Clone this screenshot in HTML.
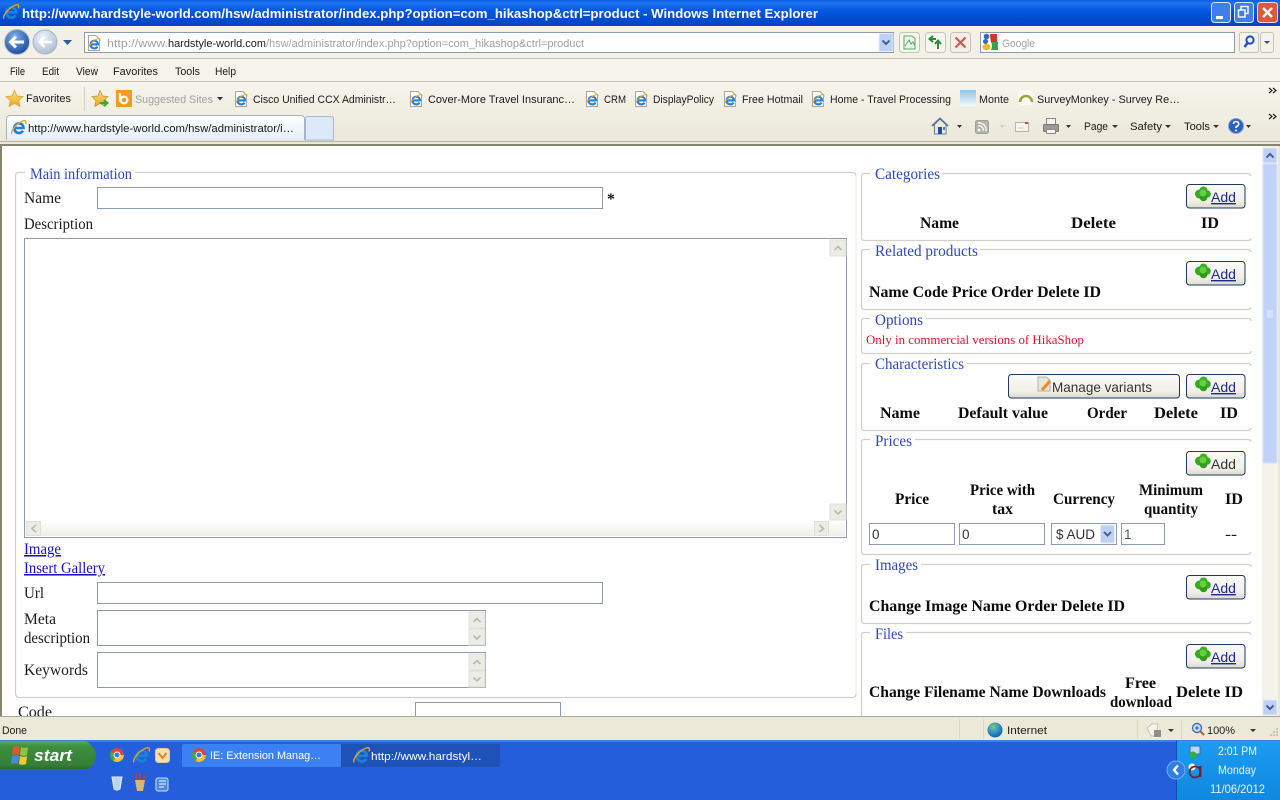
<!DOCTYPE html>
<html lang="en"><head><meta charset="utf-8"><title>Windows Internet Explorer</title>
<style>
html,body{margin:0;padding:0;background:#fff;overflow:hidden}
svg{display:block}
text{white-space:pre}
.u{font:11px "Liberation Sans",sans-serif;fill:#1a1a1a}
.g{fill:#a0a0a0}
.s{font:15.5px "Liberation Serif",serif;fill:#1c1c1c}
.b{font:bold 15.5px "Liberation Serif",serif;fill:#0c0c0c}
.l{font:15.5px "Liberation Serif",serif;fill:#2f48b8}
.a{font:15.5px "Liberation Serif",serif;fill:#1a10c8;text-decoration:underline}
.w{font:11px "Liberation Sans",sans-serif;fill:#fff}
.f{fill:none;stroke:#d0d0c8;stroke-width:1.2}
.i{fill:#fff;stroke:#8c9cb0;stroke-width:1}
.ab{font:14px "Liberation Sans",sans-serif;fill:#2a3468}
</style></head><body>
<svg width="1280" height="800" viewBox="0 0 1280 800" xmlns="http://www.w3.org/2000/svg">
<defs>
<linearGradient id="tb" x1="0" y1="0" x2="0" y2="1"><stop offset="0" stop-color="#0b5fe6"/><stop offset=".12" stop-color="#1c72f0"/><stop offset=".4" stop-color="#0458e0"/><stop offset="1" stop-color="#0042c4"/></linearGradient>
<linearGradient id="tool" x1="0" y1="0" x2="0" y2="1"><stop offset="0" stop-color="#f6f4ec"/><stop offset="1" stop-color="#ebe8d9"/></linearGradient>
<linearGradient id="btn" x1="0" y1="0" x2="0" y2="1"><stop offset="0" stop-color="#fbfbf8"/><stop offset=".7" stop-color="#f0efe8"/><stop offset="1" stop-color="#dcdbd0"/></linearGradient>
<linearGradient id="hb" x1="0" y1="0" x2="0" y2="1"><stop offset="0" stop-color="#fff"/><stop offset="1" stop-color="#eeeee8"/></linearGradient>
<linearGradient id="start" x1="0" y1="0" x2="0" y2="1"><stop offset="0" stop-color="#5aa85c"/><stop offset=".2" stop-color="#3c8f3e"/><stop offset=".85" stop-color="#357f37"/><stop offset="1" stop-color="#2a6b2c"/></linearGradient>
<linearGradient id="tray" x1="0" y1="0" x2="0" y2="1"><stop offset="0" stop-color="#1c9cf0"/><stop offset="1" stop-color="#1088e0"/></linearGradient>
<linearGradient id="tab" x1="0" y1="0" x2="0" y2="1"><stop offset="0" stop-color="#fff"/><stop offset="1" stop-color="#e4edfa"/></linearGradient>
<linearGradient id="monte" x1="0" y1="0" x2="0" y2="1"><stop offset="0" stop-color="#8fc6ea"/><stop offset="1" stop-color="#f2f8fc"/></linearGradient>
<linearGradient id="star" x1="0" y1="0" x2="0" y2="1"><stop offset="0" stop-color="#fbe07a"/><stop offset="1" stop-color="#f0a422"/></linearGradient>
<radialGradient id="bk" cx=".4" cy=".3" r=".8"><stop offset="0" stop-color="#7fb0ea"/><stop offset="1" stop-color="#123f92"/></radialGradient>
<radialGradient id="fw" cx=".4" cy=".3" r=".8"><stop offset="0" stop-color="#eef3f9"/><stop offset="1" stop-color="#a5b7cc"/></radialGradient>
<radialGradient id="gl" cx=".4" cy=".3" r=".8"><stop offset="0" stop-color="#7ccc70"/><stop offset=".5" stop-color="#2b8fd0"/><stop offset="1" stop-color="#134f8c"/></radialGradient>
<g id="ie"><path d="M3.500 8H12.500C12.500 4 8 2 5 4.500C2 7 3 12.500 7.500 13C9.500 13.200 11 12.200 12 10.800" fill="none" stroke="#1f7fdc" stroke-width="2.600"/><path d="M.8 14C-.5 10.500 6 3 12.500 .8C15 .1 15.500 2 14.500 4" fill="none" stroke="#e6a41e" stroke-width="1.300"/></g>
<g id="pg"><path d="M1.500 .5H9L12.500 4V15.500H1.500Z" fill="#fff" stroke="#a8a89e"/><use href="#ie" transform="translate(1 3) scale(.8)"/></g>
<g id="plus"><circle cx="5.500" cy="8" r="4.500" fill="#36a822"/><circle cx="9.500" cy="4.500" r="4" fill="#3cae25"/><circle cx="13" cy="8" r="3.800" fill="#36a822"/><circle cx="9.500" cy="11.500" r="3.800" fill="#2f9c1e"/><circle cx="9" cy="7" r="3.500" fill="#62d040"/></g>
<g id="add"><rect x=".5" y=".5" width="58.500" height="23.500" rx="3" fill="url(#btn)" stroke="#1d3a5f" stroke-width="1"/><use href="#plus" x="8" y="2"/></g>
<g id="up"><rect width="16" height="16" fill="#ecece6" stroke="#e0e0da"/><path d="M4.500 10L8 6.500L11.500 10" fill="none" stroke="#b9b9b0" stroke-width="1.600"/></g>
<g id="dn"><rect width="16" height="16" fill="#ecece6" stroke="#e0e0da"/><path d="M4.500 6.500L8 10L11.500 6.500" fill="none" stroke="#b9b9b0" stroke-width="1.600"/></g>
<g id="bdn"><rect width="14" height="18" rx="1" fill="#bfd0f5" stroke="#e6ecf8"/><path d="M3.500 7L7 10.500L10.500 7" fill="none" stroke="#3d5a8f" stroke-width="1.900"/></g>
<g id="chr"><circle cx="7" cy="7" r="7" fill="#d8453a"/><path d="M7 7L14 7A7 7 0 0 1 3.500 13Z" fill="#f0c030"/><path d="M7 7L3.500 13A7 7 0 0 1 1 3.500Z" fill="#3fa74a"/><circle cx="7" cy="7" r="3" fill="#3a78d8" stroke="#fff"/></g>
</defs>

<rect width="1280" height="800" fill="#fff"/>
<rect width="1280" height="26" fill="url(#tb)"/>
<use href="#ie" transform="translate(3 4) scale(1.050)"/>
<text x="22" y="18" font-family="Liberation Sans,sans-serif" font-weight="bold" font-size="13" fill="#fff" textLength="796" lengthAdjust="spacingAndGlyphs">http://www.hardstyle-world.com/hsw/administrator/index.php?option=com_hikashop&amp;ctrl=product - Windows Internet Explorer</text>
<rect x="1211.500" y="2.500" width="19" height="20" rx="3" fill="#3f7fe8" stroke="#dce8fb"/><rect x="1216" y="16" width="7" height="3" fill="#fff"/>
<rect x="1234.500" y="2.500" width="19" height="20" rx="3" fill="#3f7fe8" stroke="#dce8fb"/><rect x="1241" y="6.500" width="7" height="7" fill="none" stroke="#fff" stroke-width="1.400"/><rect x="1238.500" y="10" width="6.500" height="7" fill="#3f7fe8" stroke="#fff" stroke-width="1.400"/>
<rect x="1257.500" y="2.500" width="20" height="20" rx="3" fill="#e0583a" stroke="#f6d8cf"/><path d="M1263 8L1272 17M1272 8L1263 17" stroke="#fff" stroke-width="2.400"/>

<rect y="26" width="1280" height="118" fill="url(#tool)"/>
<rect y="26" width="1280" height="32" fill="#f3f1e7"/>
<rect y="58" width="1280" height="1" fill="#c4c3b6"/>
<rect y="59" width="1280" height="22" fill="#f5f3ea"/>
<rect y="81" width="1280" height="1" fill="#c4c3b6"/>
<rect y="82" width="1280" height="60" fill="url(#tool)"/>
<rect y="141" width="1280" height="1" fill="#b4b3a6"/>
<rect y="142" width="1280" height="2" fill="#ece9d8"/>
<rect y="144" width="1280" height="2" fill="#85856f"/>

<circle cx="45" cy="42" r="12" fill="url(#fw)" stroke="#a8b6c6"/><path d="M52 42H40M44.500 37L39.500 42L44.500 47" fill="none" stroke="#fff" stroke-width="2.600"/>
<circle cx="17" cy="42" r="12.500" fill="url(#bk)" stroke="#b4c2d4"/><path d="M24 42H11M16 36.500L10.500 42L16 47.500" fill="none" stroke="#fff" stroke-width="3"/>
<path d="M63 40H72L67.500 45Z" fill="#2a5d9c"/>
<rect x="84.500" y="32.500" width="809" height="20" fill="#fff" stroke="#8b9cab"/>
<use href="#pg" x="87" y="35"/>
<text class="u g" x="107" y="47" textLength="61" lengthAdjust="spacingAndGlyphs">http://www.</text>
<text class="u" x="168" y="47" textLength="98" lengthAdjust="spacingAndGlyphs">hardstyle-world.com</text>
<text class="u g" x="266" y="47" textLength="318" lengthAdjust="spacingAndGlyphs">/hsw/administrator/index.php?option=com_hikashop&amp;ctrl=product</text>
<use href="#bdn" x="879" y="33.500"/>
<rect x="899.500" y="32.500" width="20" height="20" rx="3" fill="#f7f6ef" stroke="#c4c4b8"/><path d="M904 36H912L915 38.500V49H904Z" fill="#eef7ec" stroke="#5aa860"/><path d="M905 46L909 40L911 44L913 42L915 46" fill="none" stroke="#5aa860"/>
<rect x="925.500" y="32.500" width="20" height="20" rx="3" fill="#f7f6ef" stroke="#c4c4b8"/><path d="M936 39H930M933 36L929.500 39L933 42" fill="none" stroke="#2c8a3a" stroke-width="2"/><path d="M938 49V41M935 44L938 40.500L941 44" fill="none" stroke="#2c8a3a" stroke-width="2"/>
<rect x="950.500" y="32.500" width="20" height="20" rx="3" fill="#f5ede8" stroke="#c8c0b8"/><path d="M955.500 37.500L965.500 47.500M965.500 37.500L955.500 47.500" stroke="#c85a58" stroke-width="2.200"/>
<rect x="980.500" y="32.500" width="254" height="20" fill="#fff" stroke="#8b9cab"/>
<circle cx="986.500" cy="36.500" r="2.800" fill="#2f66c8"/><circle cx="985.500" cy="41.500" r="2.500" fill="#2f66c8"/><ellipse cx="986.500" cy="47" rx="4" ry="3.200" fill="#f0b72a"/><path d="M990 34H997V42H991Q990 38 990 34Z" fill="#d8322a"/><path d="M991 42H998V50H991Q993 46 991 42Z" fill="#3aa04a"/>
<text class="u g" x="1002" y="47" textLength="33" lengthAdjust="spacingAndGlyphs">Google</text>
<rect x="1239.500" y="32.500" width="19" height="20" rx="2" fill="#f4f3ea" stroke="#c4c4b8"/><circle cx="1250" cy="40" r="3.600" fill="none" stroke="#1b4fc4" stroke-width="2"/><path d="M1247.500 43L1244.500 47" stroke="#1b4fc4" stroke-width="2.400"/>
<rect x="1260.500" y="32.500" width="13" height="20" rx="2" fill="#f4f3ea" stroke="#c4c4b8"/><path d="M1264 41H1270L1267 44Z" fill="#2a4f8c"/>

<text class="u" x="10" y="75" textLength="15" lengthAdjust="spacingAndGlyphs">File</text>
<text class="u" x="42" y="75" textLength="17" lengthAdjust="spacingAndGlyphs">Edit</text>
<text class="u" x="76" y="75" textLength="22" lengthAdjust="spacingAndGlyphs">View</text>
<text class="u" x="113" y="75" textLength="45" lengthAdjust="spacingAndGlyphs">Favorites</text>
<text class="u" x="175" y="75" textLength="25" lengthAdjust="spacingAndGlyphs">Tools</text>
<text class="u" x="215" y="75" textLength="21" lengthAdjust="spacingAndGlyphs">Help</text>

<path d="M14.500 90.500L17 96L23 96.600L18.600 100.600L20 106.500L14.500 103.400L9 106.500L10.400 100.600L6 96.600L12 96Z" fill="url(#star)" stroke="#d8a038" stroke-width=".8"/>
<text class="u" x="26" y="102" textLength="45" lengthAdjust="spacingAndGlyphs">Favorites</text>
<rect x="84" y="87" width="1" height="24" fill="#d2d0be"/>
<path d="M100 90.500L102.500 96L108 96.600L104 100.600L105.200 106.500L100 103.400L94.800 106.500L96 100.600L92 96.600L98 96Z" fill="url(#star)" stroke="#b89a40" stroke-width=".8"/><path d="M100 103H106M104 100L107.500 103L104 106" fill="none" stroke="#3aa53a" stroke-width="2"/>
<rect x="116" y="90" width="16" height="17" fill="#f59a1d"/><path d="M120 93V102" stroke="#fff" stroke-width="2.400"/><circle cx="124" cy="100" r="3.400" fill="none" stroke="#fff" stroke-width="2.200"/>
<text class="u g" x="135" y="103" textLength="78" lengthAdjust="spacingAndGlyphs">Suggested Sites</text>
<path d="M217 97H223L220 100.500Z" fill="#333"/>
<use href="#pg" x="234" y="91"/><text class="u" x="253" y="103" textLength="143" lengthAdjust="spacingAndGlyphs">Cisco Unified CCX Administr…</text>
<use href="#pg" x="409" y="91"/><text class="u" x="428" y="103" textLength="147" lengthAdjust="spacingAndGlyphs">Cover-More Travel Insuranc…</text>
<use href="#pg" x="585" y="91"/><text class="u" x="604" y="103" textLength="22" lengthAdjust="spacingAndGlyphs">CRM</text>
<use href="#pg" x="634" y="91"/><text class="u" x="653" y="103" textLength="61" lengthAdjust="spacingAndGlyphs">DisplayPolicy</text>
<use href="#pg" x="723" y="91"/><text class="u" x="742" y="103" textLength="61" lengthAdjust="spacingAndGlyphs">Free Hotmail</text>
<use href="#pg" x="811" y="91"/><text class="u" x="830" y="103" textLength="121" lengthAdjust="spacingAndGlyphs">Home - Travel Processing</text>
<rect x="960" y="90" width="16" height="16" fill="url(#monte)"/>
<text class="u" x="979" y="103" textLength="30" lengthAdjust="spacingAndGlyphs">Monte</text>
<rect x="1018" y="90" width="15" height="15" rx="3" fill="#fafaf2"/><path d="M1020 102A6 6 0 0 1 1032 102" fill="none" stroke="#9aa83c" stroke-width="2.600"/>
<text class="u" x="1037" y="103" textLength="143" lengthAdjust="spacingAndGlyphs">SurveyMonkey - Survey Re…</text>
<path d="M1269 88L1272 90.500L1269 93M1273 88L1276 90.500L1273 93" fill="none" stroke="#222" stroke-width="1.200"/>

<path d="M6.500 140V119Q6.500 115.500 10 115.500H301Q304.500 115.500 304.500 119V140" fill="url(#tab)" stroke="#a6b2c2"/>
<use href="#ie" transform="translate(11 120)"/>
<text class="u" x="28" y="132" textLength="266" lengthAdjust="spacingAndGlyphs">http://www.hardstyle-world.com/hsw/administrator/i…</text>
<path d="M305.500 140V119Q305.500 116.500 308 116.500H331Q333.500 116.500 333.500 119V140Z" fill="#dde8f8" stroke="#a9bad0"/>

<path d="M934.500 124.500V134H946V124.500L940 119Z" fill="#f0ecdc" stroke="#6c7c98"/><path d="M932 126L940 118.500L948 126" fill="none" stroke="#5f7396" stroke-width="1.800"/><rect x="938" y="127" width="4" height="7" fill="#1f4e9c"/><rect x="943" y="127" width="2" height="3" fill="#4f80c8"/>
<path d="M957 125H962L959.500 128Z" fill="#333"/>
<rect x="975.500" y="120.500" width="13" height="13" rx="2" fill="#b4b4ac" stroke="#a0a098"/><circle cx="979" cy="130" r="1.400" fill="#fff"/><path d="M978 126A4 4 0 0 1 983 131M978 123A7 7 0 0 1 986 131" fill="none" stroke="#fff" stroke-width="1.200"/>
<path d="M1000 125H1005L1002.500 128Z" fill="#d0d0c8"/>
<rect x="1015.500" y="122.500" width="13" height="9" fill="#f6f5f0" stroke="#b4b4aa"/><path d="M1018 128H1023" stroke="#c9c9c0"/><rect x="1025" y="122" width="3" height="2" fill="#d0453a"/>
<rect x="1046.500" y="118.500" width="9" height="6" fill="#f4f4f0" stroke="#888"/><rect x="1043.500" y="124.500" width="15" height="7" rx="1" fill="#9a9a96" stroke="#777"/><rect x="1046.500" y="129.500" width="9" height="4" fill="#fff" stroke="#888"/>
<path d="M1066 125H1071L1068.500 128Z" fill="#333"/>
<text class="u" x="1084" y="130" textLength="24" lengthAdjust="spacingAndGlyphs">Page</text><path d="M1112 125H1118L1115 128Z" fill="#333"/>
<text class="u" x="1130" y="130" textLength="32" lengthAdjust="spacingAndGlyphs">Safety</text><path d="M1165 125H1171L1168 128Z" fill="#333"/>
<text class="u" x="1184" y="130" textLength="26" lengthAdjust="spacingAndGlyphs">Tools</text><path d="M1213 125H1219L1216 128Z" fill="#333"/>
<circle cx="1236" cy="126" r="7.500" fill="#2f5fc0" stroke="#8fa5d0"/><path d="M1233.500 124Q1233.500 121.500 1236 121.500Q1238.700 121.500 1238.700 124Q1238.700 125.500 1236 127V128" fill="none" stroke="#fff" stroke-width="1.600"/><circle cx="1236" cy="130.500" r="1" fill="#fff"/>
<path d="M1246 125H1251L1248.500 128Z" fill="#333"/>
<path d="M1269 114L1272 116.500L1269 119M1273 114L1276 116.500L1273 119" fill="none" stroke="#222" stroke-width="1.200"/>

<rect y="146" width="2" height="570" fill="#85856f"/>
<path class="f" d="M25 172.500H19Q15.500 172.500 15.500 176V693Q15.500 697.500 19 697.500H852Q856 697.500 856 694M856 176Q856 172.500 852 172.500H135"/>
<path d="M856 176V694" stroke="#e8e8e2" fill="none"/>
<text class="l" x="30" y="179" textLength="102" lengthAdjust="spacingAndGlyphs">Main information</text>
<text class="s" x="24" y="203" textLength="37" lengthAdjust="spacingAndGlyphs">Name</text>
<rect class="i" x="97.500" y="187.500" width="505" height="21"/>
<text class="b" x="607" y="204">*</text>
<text class="s" x="24" y="229" textLength="69" lengthAdjust="spacingAndGlyphs">Description</text>
<rect class="i" x="24.500" y="238.500" width="822" height="299"/>
<rect x="26" y="520" width="819" height="16" fill="url(#hb)"/>
<use href="#up" x="830" y="240"/><use href="#dn" x="830" y="504"/>
<rect x="26.500" y="521.500" width="14" height="14" fill="#ecece6" stroke="#e0e0da"/><path d="M36 525L32 528.500L36 532" fill="none" stroke="#b9b9b0" stroke-width="1.600"/>
<rect x="814.500" y="521.500" width="14" height="14" fill="#ecece6" stroke="#e0e0da"/><path d="M819.500 525L823.500 528.500L819.500 532" fill="none" stroke="#b9b9b0" stroke-width="1.600"/>
<text class="a" x="24" y="554" textLength="37" lengthAdjust="spacingAndGlyphs">Image</text>
<text class="a" x="24" y="573" textLength="81" lengthAdjust="spacingAndGlyphs">Insert Gallery</text>
<text class="s" x="24" y="598" textLength="20" lengthAdjust="spacingAndGlyphs">Url</text>
<rect class="i" x="97.500" y="582.500" width="505" height="21"/>
<text class="s" x="24" y="624" textLength="32" lengthAdjust="spacingAndGlyphs">Meta</text>
<text class="s" x="24" y="643" textLength="66" lengthAdjust="spacingAndGlyphs">description</text>
<rect class="i" x="97.500" y="610.500" width="388" height="35"/>
<use href="#up" x="469" y="612"/><use href="#dn" x="469" y="629"/>
<text class="s" x="24" y="675" textLength="64" lengthAdjust="spacingAndGlyphs">Keywords</text>
<rect class="i" x="97.500" y="652.500" width="388" height="35"/>
<use href="#up" x="469" y="654"/><use href="#dn" x="469" y="671"/>
<text class="s" x="18" y="717" textLength="34" lengthAdjust="spacingAndGlyphs">Code</text>
<rect class="i" x="415.500" y="702.500" width="145" height="22"/>

<path class="f" d="M870 173.500H864Q861.500 173.500 861.500 176V237Q861.500 240.500 864 240.500H1248Q1251 240.500 1251 238M1251 176Q1251 173.500 1248 173.500H942"/>
<text class="l" x="875" y="179" textLength="65" lengthAdjust="spacingAndGlyphs">Categories</text>
<use href="#add" x="1186" y="184"/><text class="ab" x="1211" y="202" text-decoration="underline" style="fill:#1f2a8a" textLength="25" lengthAdjust="spacingAndGlyphs">Add</text>
<text class="b" x="920" y="228" textLength="39" lengthAdjust="spacingAndGlyphs">Name</text>
<text class="b" x="1071" y="228" textLength="45" lengthAdjust="spacingAndGlyphs">Delete</text>
<text class="b" x="1201" y="228" textLength="18" lengthAdjust="spacingAndGlyphs">ID</text>

<path class="f" d="M870 249.500H864Q861.500 249.500 861.500 252V306Q861.500 309.500 864 309.500H1248Q1251 309.500 1251 307M1251 252Q1251 249.500 1248 249.500H980"/>
<text class="l" x="875" y="256" textLength="103" lengthAdjust="spacingAndGlyphs">Related products</text>
<use href="#add" x="1186" y="261"/><text class="ab" x="1211" y="279" text-decoration="underline" style="fill:#1f2a8a" textLength="25" lengthAdjust="spacingAndGlyphs">Add</text>
<text class="b" x="869" y="297" textLength="232" lengthAdjust="spacingAndGlyphs">Name Code Price Order Delete ID</text>

<path class="f" d="M870 318.500H864Q861.500 318.500 861.500 321V350Q861.500 353.500 864 353.500H1248Q1251 353.500 1251 351M1251 321Q1251 318.500 1248 318.500H926"/>
<text class="l" x="875" y="325" textLength="48" lengthAdjust="spacingAndGlyphs">Options</text>
<text x="866" y="344" font-family="Liberation Serif,serif" font-size="13" fill="#e01030" textLength="218" lengthAdjust="spacingAndGlyphs">Only in commercial versions of HikaShop</text>

<path class="f" d="M870 363.500H864Q861.500 363.500 861.500 366V427Q861.500 430.500 864 430.500H1248Q1251 430.500 1251 428M1251 366Q1251 363.500 1248 363.500H967"/>
<text class="l" x="875" y="369" textLength="89" lengthAdjust="spacingAndGlyphs">Characteristics</text>
<rect x="1008.500" y="374.500" width="171" height="23.500" rx="3" fill="url(#btn)" stroke="#1d3a5f" stroke-width="1"/>
<path d="M1038 377H1046L1050 380V391H1038Z" fill="#e9e6da" stroke="#b5b2a4"/><path d="M1042 390L1050 381" stroke="#ee8a2a" stroke-width="3"/>
<text class="ab" x="1052" y="392" style="fill:#333" textLength="100" lengthAdjust="spacingAndGlyphs">Manage variants</text>
<use href="#add" x="1186" y="374"/><text class="ab" x="1211" y="392" text-decoration="underline" style="fill:#1f2a8a" textLength="25" lengthAdjust="spacingAndGlyphs">Add</text>
<text class="b" x="880" y="418" textLength="40" lengthAdjust="spacingAndGlyphs">Name</text>
<text class="b" x="958" y="418" textLength="90" lengthAdjust="spacingAndGlyphs">Default value</text>
<text class="b" x="1087" y="418" textLength="40" lengthAdjust="spacingAndGlyphs">Order</text>
<text class="b" x="1154" y="418" textLength="44" lengthAdjust="spacingAndGlyphs">Delete</text>
<text class="b" x="1220" y="418" textLength="18" lengthAdjust="spacingAndGlyphs">ID</text>

<path class="f" d="M870 439.500H864Q861.500 439.500 861.500 442V551Q861.500 554.500 864 554.500H1248Q1251 554.500 1251 552M1251 442Q1251 439.500 1248 439.500H915"/>
<text class="l" x="875" y="446" textLength="37" lengthAdjust="spacingAndGlyphs">Prices</text>
<use href="#add" x="1186" y="451"/><text class="ab" x="1211" y="469" style="fill:#333" textLength="25" lengthAdjust="spacingAndGlyphs">Add</text>
<text class="b" x="895" y="504" textLength="34" lengthAdjust="spacingAndGlyphs">Price</text>
<text class="b" x="970" y="495" textLength="65" lengthAdjust="spacingAndGlyphs">Price with</text>
<text class="b" x="992" y="514" textLength="21" lengthAdjust="spacingAndGlyphs">tax</text>
<text class="b" x="1053" y="504" textLength="62" lengthAdjust="spacingAndGlyphs">Currency</text>
<text class="b" x="1139" y="495" textLength="64" lengthAdjust="spacingAndGlyphs">Minimum</text>
<text class="b" x="1144" y="514" textLength="54" lengthAdjust="spacingAndGlyphs">quantity</text>
<text class="b" x="1225" y="504" textLength="18" lengthAdjust="spacingAndGlyphs">ID</text>
<rect class="i" x="869.500" y="523.500" width="85" height="21"/>
<text x="872" y="539" font-family="Liberation Sans,sans-serif" font-size="13.500" fill="#333">0</text>
<rect class="i" x="959.500" y="523.500" width="85" height="21"/>
<text x="962" y="539" font-family="Liberation Sans,sans-serif" font-size="13.500" fill="#333">0</text>
<rect class="i" x="1051.500" y="523.500" width="65" height="21"/>
<text x="1056" y="539" font-family="Liberation Sans,sans-serif" font-size="13.500" fill="#333" textLength="39" lengthAdjust="spacingAndGlyphs">$ AUD</text>
<use href="#bdn" x="1100.500" y="525"/>
<rect class="i" x="1121.500" y="523.500" width="43" height="21"/>
<text x="1124" y="539" font-family="Liberation Sans,sans-serif" font-size="13.500" fill="#555">1</text>
<text class="s" x="1225" y="539" textLength="12" lengthAdjust="spacingAndGlyphs">--</text>

<path class="f" d="M870 564.500H864Q861.500 564.500 861.500 567V620Q861.500 623.500 864 623.500H1248Q1251 623.500 1251 621M1251 567Q1251 564.500 1248 564.500H921"/>
<text class="l" x="875" y="570" textLength="43" lengthAdjust="spacingAndGlyphs">Images</text>
<use href="#add" x="1186" y="575"/><text class="ab" x="1211" y="593" text-decoration="underline" style="fill:#1f2a8a" textLength="25" lengthAdjust="spacingAndGlyphs">Add</text>
<text class="b" x="869" y="611" textLength="256" lengthAdjust="spacingAndGlyphs">Change Image Name Order Delete ID</text>

<path class="f" d="M870 632.500H864Q861.500 632.500 861.500 635V716M1251 635Q1251 632.500 1248 632.500H906"/>
<text class="l" x="875" y="639" textLength="28" lengthAdjust="spacingAndGlyphs">Files</text>
<use href="#add" x="1186" y="644"/><text class="ab" x="1211" y="662" text-decoration="underline" style="fill:#1f2a8a" textLength="25" lengthAdjust="spacingAndGlyphs">Add</text>
<text class="b" x="869" y="697" textLength="237" lengthAdjust="spacingAndGlyphs">Change Filename Name Downloads</text>
<text class="b" x="1125" y="688" textLength="31" lengthAdjust="spacingAndGlyphs">Free</text>
<text class="b" x="1110" y="707" textLength="62" lengthAdjust="spacingAndGlyphs">download</text>
<text class="b" x="1176" y="697" textLength="67" lengthAdjust="spacingAndGlyphs">Delete ID</text>

<rect x="1262" y="146" width="18" height="570" fill="#f3f3ea"/>
<rect x="1278" y="146" width="2" height="570" fill="#e8e6d8"/>
<rect x="1263" y="148" width="14" height="15" rx="1" fill="#bfd0f5" stroke="#e6ecf8"/><path d="M1266.500 157.500L1270 154L1273.500 157.500" fill="none" stroke="#3d5a8f" stroke-width="1.900"/>
<rect x="1263" y="164" width="14" height="299" rx="1" fill="#c1d3fb" stroke="#d6e2fc"/>
<path d="M1267 311H1273M1267 313H1273M1267 315H1273M1267 317H1273" stroke="#e8effe"/>
<rect x="1263" y="700" width="14" height="15" rx="1" fill="#bfd0f5" stroke="#e6ecf8"/><path d="M1266.500 705.500L1270 709L1273.500 705.500" fill="none" stroke="#3d5a8f" stroke-width="1.900"/>

<rect y="716" width="1280" height="1" fill="#a8a798"/>
<rect y="717" width="1280" height="23" fill="#ece9d8"/>
<text class="u" x="2" y="734" textLength="25" lengthAdjust="spacingAndGlyphs">Done</text>
<rect x="959" y="719" width="1" height="20" fill="#dcd9c8"/><rect x="983" y="719" width="1" height="20" fill="#dcd9c8"/><rect x="1137" y="719" width="1" height="20" fill="#dcd9c8"/><rect x="1181" y="719" width="1" height="20" fill="#dcd9c8"/>
<circle cx="995" cy="730" r="7.500" fill="url(#gl)"/>
<text class="u" x="1007" y="734" textLength="40" lengthAdjust="spacingAndGlyphs">Internet</text>
<path d="M1147 728L1152 724H1158L1156 736H1151Z" fill="#f4f4ee" stroke="#c4c4ba"/><rect x="1154" y="730" width="7" height="7" fill="#8f8f84"/>
<path d="M1168 729H1174L1171 732Z" fill="#333"/>
<circle cx="1197" cy="728" r="4.500" fill="#cfe0f6" stroke="#3f6eb5" stroke-width="1.400"/><path d="M1195 728H1199M1197 726V730" stroke="#2a5aa8"/><path d="M1200.500 731.500L1204 735" stroke="#a8662a" stroke-width="2"/>
<text class="u" x="1207" y="734" textLength="28" lengthAdjust="spacingAndGlyphs">100%</text>
<path d="M1250 729H1256L1253 732Z" fill="#333"/>
<path d="M1276 728h2v2h-2zM1273 731h2v2h-2zM1276 731h2v2h-2zM1270 734h2v2h-2zM1273 734h2v2h-2zM1276 734h2v2h-2z" fill="#c8c5b2"/>

<rect y="740" width="1280" height="60" fill="#245edb"/>
<rect y="740" width="1280" height="2" fill="#3d7fe6"/>
<path d="M0 741H86Q96 748 96 755Q96 763 88 769H0Z" fill="url(#start)"/>
<path d="M13 747Q16 745.500 20 747L19 755Q15.500 753.500 12 755Z" fill="#e0572c"/><path d="M21 747Q24 748.500 28 747L27 755Q24 756.500 20 755Z" fill="#8cc63a"/><path d="M12 756Q15.500 754.500 19 756L18 764Q14.500 762.500 11 764Z" fill="#4a88e0"/><path d="M20 756Q23.500 757.500 27 756L26 764Q23 765.500 19 764Z" fill="#f4c82a"/>
<text x="34" y="761" font-family="Liberation Sans,sans-serif" font-weight="bold" font-style="italic" font-size="17" fill="#fff" textLength="38" lengthAdjust="spacingAndGlyphs">start</text>
<use href="#chr" x="110" y="748"/>
<use href="#ie" transform="translate(133 747) scale(1.100)"/>
<rect x="155.500" y="748.500" width="14" height="14" rx="3" fill="#f5dfb5" stroke="#e8c890"/><path d="M158.500 753L162.500 758L166.500 753" fill="none" stroke="#e08a20" stroke-width="2"/>
<rect x="182" y="744" width="159" height="23" rx="2" fill="#3c81f3"/>
<use href="#chr" x="192" y="748"/>
<text class="w" x="210" y="759" textLength="111" lengthAdjust="spacingAndGlyphs">IE: Extension Manag…</text>
<rect x="341" y="744" width="159" height="23" rx="2" fill="#1e52b7"/>
<use href="#ie" transform="translate(353 747) scale(1.100)"/>
<text class="w" x="371" y="760" textLength="111" lengthAdjust="spacingAndGlyphs">http://www.hardstyl…</text>
<path d="M112 777H122L120 789Q117 791 114 789Z" fill="#b8d4f4" stroke="#e4eefa"/>
<path d="M135 780H145L143 791H137Z" fill="#d8b870"/><path d="M137 780L136 774M140 780V773M143 780L145 775" stroke="#c83a2a" stroke-width="1.600"/>
<rect x="156" y="778" width="12" height="13" rx="2" fill="#4a88d8" stroke="#cfe0f8"/><path d="M159 781H166M159 784H166M159 787H164" stroke="#fff"/>

<rect x="1177" y="741" width="103" height="59" fill="url(#tray)"/>
<rect x="1176" y="741" width="1" height="59" fill="#0f4fa8"/>
<rect x="1190" y="746" width="10" height="8" fill="#bcd8f6" stroke="#3a68a8"/><circle cx="1193" cy="755" r="3.500" fill="#34b03a"/>
<circle cx="1176" cy="770" r="9" fill="#2e7fe2" stroke="#6fb0f0"/><path d="M1178 765.500L1174 770L1178 774.500" fill="none" stroke="#fff" stroke-width="2.400"/>
<circle cx="1192" cy="767" r="3.500" fill="#fff"/><circle cx="1195" cy="772" r="5.500" fill="none" stroke="#7a1e2a" stroke-width="1.800"/><rect x="1199" y="766" width="2.500" height="11" fill="#7a1e2a"/>
<text class="w" x="1218" y="755" style="font-size:12px;fill:#e8f4ff" textLength="39" lengthAdjust="spacingAndGlyphs">2:01 PM</text>
<text class="w" x="1218" y="774" style="font-size:12px;fill:#e8f4ff" textLength="38" lengthAdjust="spacingAndGlyphs">Monday</text>
<text class="w" x="1210" y="793" style="font-size:12px;fill:#e8f4ff" textLength="55" lengthAdjust="spacingAndGlyphs">11/06/2012</text>
</svg>
</body></html>
